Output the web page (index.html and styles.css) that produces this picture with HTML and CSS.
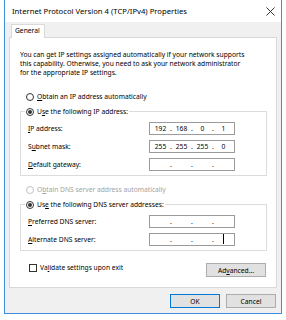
FILE: index.html
```html
<!DOCTYPE html>
<html>
<head>
<meta charset="utf-8">
<link rel="stylesheet" href="styles.css">
</head>
<body>
<div class="window">
  <div class="titlebar">
    <span class="title">Internet Protocol Version 4 (TCP/IPv4) Properties</span>
    <svg class="close" width="9" height="9" viewBox="0 0 9 9"><path d="M0.5 0.5L8.5 8.5M8.5 0.5L0.5 8.5" stroke="#333" stroke-width="1" fill="none"/></svg>
  </div>
  <div class="client">
    <div class="tabs"><div class="tab">General</div></div>
    <div class="panel">
      <p class="desc">You can get IP settings assigned automatically if your network supports<br>this capability. Otherwise, you need to ask your network administrator<br>for the appropriate IP settings.</p>
      <div class="option first"><span class="radio"></span><span><u>O</u>btain an IP address automatically</span></div>
      <fieldset class="group">
        <legend><span class="option"><span class="radio checked"></span><span>U<u>s</u>e the following IP address:</span></span></legend>
        <div class="row"><span class="label"><u>I</u>P address:</span><div class="ip"><span class="seg">192</span><span class="dot">.</span><span class="seg">168</span><span class="dot">.</span><span class="seg">0</span><span class="dot">.</span><span class="seg">1</span></div></div>
        <div class="row"><span class="label">S<u>u</u>bnet mask:</span><div class="ip"><span class="seg">255</span><span class="dot">.</span><span class="seg">255</span><span class="dot">.</span><span class="seg">255</span><span class="dot">.</span><span class="seg">0</span></div></div>
        <div class="row"><span class="label"><u>D</u>efault gateway:</span><div class="ip"><span class="seg"></span><span class="dot">.</span><span class="seg"></span><span class="dot">.</span><span class="seg"></span><span class="dot">.</span><span class="seg"></span></div></div>
      </fieldset>
      <div class="option disabled"><span class="radio"></span><span>O<u>b</u>tain DNS server address automatically</span></div>
      <fieldset class="group">
        <legend><span class="option"><span class="radio checked"></span><span>Us<u>e</u> the following DNS server addresses:</span></span></legend>
        <div class="row"><span class="label"><u>P</u>referred DNS server:</span><div class="ip"><span class="seg"></span><span class="dot">.</span><span class="seg"></span><span class="dot">.</span><span class="seg"></span><span class="dot">.</span><span class="seg"></span></div></div>
        <div class="row"><span class="label"><u>A</u>lternate DNS server:</span><div class="ip"><span class="seg"></span><span class="dot">.</span><span class="seg"></span><span class="dot">.</span><span class="seg"></span><span class="dot">.</span><span class="seg"><span class="caret"></span></span></div></div>
      </fieldset>
      <div class="bottom">
        <div class="check"><span class="box"></span><span>Va<u>l</u>idate settings upon exit</span></div>
        <button class="btn adv">Ad<u>v</u>anced...</button>
      </div>
    </div>
    <div class="buttons">
      <button class="btn ok">OK</button>
      <button class="btn">Cancel</button>
    </div>
  </div>
</div>
</body>
</html>
```

FILE: styles.css
```css
body {
  margin: 0;
  background: #fff;
  color: #000;
  font-family: "Noto Sans", "Open Sans", sans-serif;
  font-size: 6.7px;
  line-height: 9px;
}

u {
  text-underline-offset: 1px;
}

.window {
  margin-left: 4px;
  width: 278px;
  box-sizing: border-box;
  border: 1px solid #3d8fdb;
  border-top: 0;
}

.titlebar {
  height: 22px;
  display: flex;
  align-items: center;
  justify-content: space-between;
  padding: 0 6px 0 7px;
  background: #fff;
}

.title {
  font-size: 7.7px;
}

.client {
  box-sizing: border-box;
  height: 291px;
  background: #f0f0f0;
  padding: 2px 4px 0 4px;
}

.tabs {
  display: flex;
  height: 13px;
}

.tab {
  box-sizing: border-box;
  width: 34px;
  height: 14px;
  margin-left: 2px;
  padding-left: 3px;
  border: 1px solid #d9d9d9;
  border-bottom: 0;
  background: #fff;
  line-height: 12px;
  position: relative;
  z-index: 1;
}

.panel {
  box-sizing: border-box;
  height: 251px;
  border: 1px solid #d9d9d9;
  background: #fff;
  padding: 12px 9px 0 10px;
}

.desc {
  margin: 0;
}

.option {
  display: flex;
  align-items: center;
  height: 15px;
}

.option.first {
  margin-top: 12px;
  margin-left: 6px;
}

.option.disabled {
  margin-top: 6px;
  margin-left: 6px;
  color: #a3a3a3;
}

.option.disabled .radio {
  border-color: #c2c2c2;
}

.radio {
  box-sizing: border-box;
  width: 8px;
  height: 8px;
  border: 1px solid #333;
  border-radius: 50%;
  margin-right: 3px;
  display: flex;
  align-items: center;
  justify-content: center;
  background: #fff;
}

.radio.checked::after {
  content: "";
  width: 4px;
  height: 4px;
  border-radius: 50%;
  background: #333;
}

.group {
  margin: 0;
  min-width: 0;
  padding: 0 0 2px 4px;
  border: 1px solid #dcdcdc;
}

.group legend {
  padding: 0 1px;
}

.row {
  display: flex;
  align-items: center;
  height: 18px;
  margin-left: 3px;
}

.label {
  width: 121px;
}

.ip {
  box-sizing: border-box;
  display: flex;
  align-items: center;
  width: 86px;
  height: 13px;
  padding: 0 1px;
  border: 1px solid #9b9b9b;
  background: #fff;
}

.seg {
  width: 19px;
  text-align: center;
  display: flex;
  justify-content: center;
  align-items: center;
}

.dot {
  width: 2px;
  text-align: center;
}

.caret {
  width: 1px;
  height: 10px;
  background: #000;
}

.bottom {
  display: flex;
  justify-content: space-between;
  align-items: flex-start;
  margin-top: 12px;
}

.check {
  display: flex;
  align-items: center;
  height: 9px;
  margin-left: 9px;
}

.box {
  box-sizing: border-box;
  width: 8px;
  height: 8px;
  border: 1px solid #333;
  margin-right: 3px;
  background: #fff;
}

.btn {
  box-sizing: border-box;
  height: 14px;
  width: 50px;
  padding: 0;
  border: 1px solid #adadad;
  background: #e1e1e1;
  font: inherit;
  color: #000;
  display: flex;
  align-items: center;
  justify-content: center;
}

.adv {
  width: 60px;
  margin-right: 1px;
}

.ok {
  border-color: #0078d7;
}

.buttons {
  display: flex;
  justify-content: flex-end;
  gap: 6px;
  margin-top: 6px;
  padding-right: 1px;
}
```
